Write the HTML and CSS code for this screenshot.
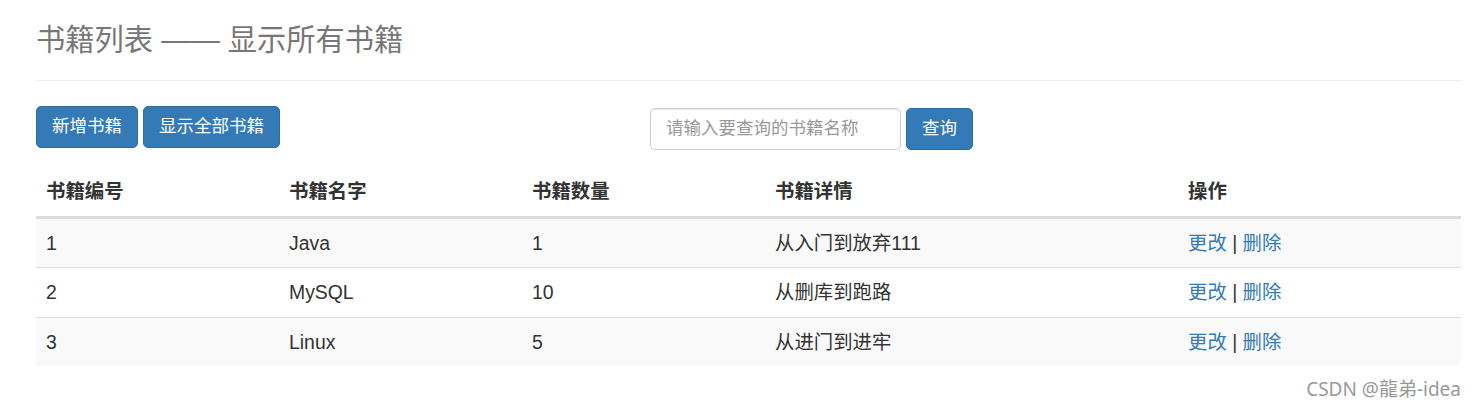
FILE: index.html
```html
<!DOCTYPE html>
<html lang="zh-CN">
<head>
<meta charset="utf-8">
<title>书籍列表</title>
<link rel="stylesheet" href="styles.css">
</head>
<body>
<div class="page">
  <div class="page-header">
    <h1 class="title">书籍列表 —— 显示所有书籍</h1>
  </div>
  <div class="toolbar">
    <div class="actions">
      <a class="btn" href="#">新增书籍</a>
      <a class="btn" href="#">显示全部书籍</a>
    </div>
    <form class="search">
      <input class="search-input" type="text" placeholder="请输入要查询的书籍名称">
      <button class="btn" type="button">查询</button>
    </form>
  </div>
  <table class="books">
    <colgroup>
      <col class="c1"><col class="c2"><col class="c3"><col class="c4"><col class="c5">
    </colgroup>
    <thead>
      <tr><th>书籍编号</th><th>书籍名字</th><th>书籍数量</th><th>书籍详情</th><th>操作</th></tr>
    </thead>
    <tbody>
      <tr><td>1</td><td>Java</td><td>1</td><td>从入门到放弃111</td><td><a href="#">更改</a> | <a href="#">删除</a></td></tr>
      <tr><td>2</td><td>MySQL</td><td>10</td><td>从删库到跑路</td><td><a href="#">更改</a> | <a href="#">删除</a></td></tr>
      <tr><td>3</td><td>Linux</td><td>5</td><td>从进门到进牢</td><td><a href="#">更改</a> | <a href="#">删除</a></td></tr>
    </tbody>
  </table>
  <div class="watermark">CSDN @龍弟-idea</div>
</div>
</body>
</html>
```

FILE: styles.css
```css
html, body {
  margin: 0;
  padding: 0;
  background: #fff;
}

body {
  font-family: "Liberation Sans", "Noto Sans CJK SC", sans-serif;
  font-size: 17.5px;
  line-height: 25px;
  color: #333;
}

.page {
  padding: 0 17px 0 36px;
}

.page-header {
  padding: 23.5px 0 24px;
  border-bottom: 1px solid #eee;
}

.title {
  margin: 0;
  font-size: 29.25px;
  line-height: 32px;
  font-weight: normal;
  color: #777;
}

.toolbar {
  display: grid;
  grid-template-columns: 614px auto;
  align-items: start;
  margin-top: 25px;
}

.actions {
  display: flex;
  gap: 5px;
}

.btn {
  display: inline-block;
  box-sizing: border-box;
  padding: 7.5px 15px;
  font-family: inherit;
  font-size: 17.5px;
  line-height: 25px;
  color: #fff;
  background: #337ab7;
  border: 1.25px solid #2e6da4;
  border-radius: 5px;
  text-decoration: none;
  white-space: nowrap;
  cursor: pointer;
}

.search {
  display: flex;
  gap: 5px;
  margin: 2px 0 0;
}

.search-input {
  box-sizing: border-box;
  width: 251px;
  height: 42.5px;
  padding: 7.5px 15px;
  font-family: inherit;
  font-size: 17.5px;
  color: #555;
  border: 1.25px solid #ccc;
  border-radius: 5px;
  box-shadow: inset 0 1px 1px rgba(0, 0, 0, .075);
  outline: none;
}

.search-input::placeholder {
  color: #999;
}

.books {
  width: 100%;
  margin-top: 16.5px;
  border-collapse: collapse;
  table-layout: fixed;
  font-size: 19.4px;
}

.c1, .c2, .c3 { width: 243px; }
.c4 { width: 413px; }
.c5 { width: 283px; }

.books th {
  text-align: left;
  font-weight: bold;
  padding: 10px;
  line-height: 29px;
  border-bottom: 3px solid #ddd;
}

.books td {
  padding: 10px;
  line-height: 28.5px;
  border-top: 1px solid #ddd;
}

.books tbody tr:nth-child(odd) {
  background: #f9f9f9;
}

.books a {
  color: #337ab7;
  text-decoration: none;
}

.watermark {
  margin-top: 13px;
  text-align: right;
  font-family: "Noto Sans", "Noto Sans CJK SC", sans-serif;
  font-size: 19px;
  line-height: 20px;
  color: #999;
}
```
